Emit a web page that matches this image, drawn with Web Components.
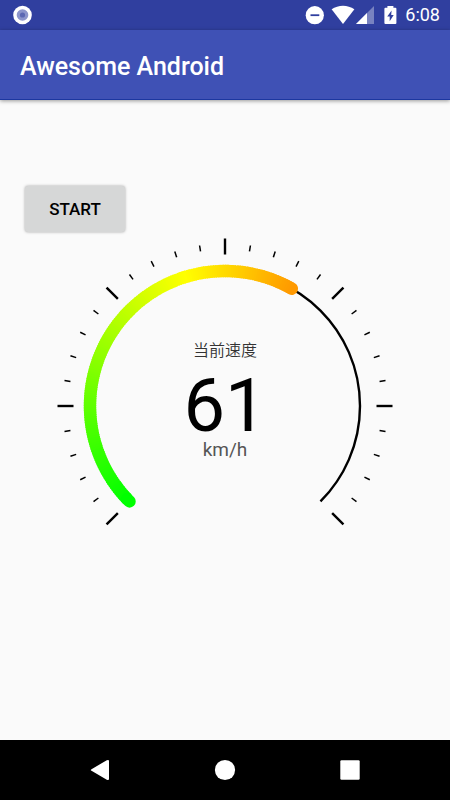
<!DOCTYPE html>
<html lang="zh">
<head>
<meta charset="utf-8">
<meta name="viewport" content="width=device-width, initial-scale=1">
<title>Awesome Android</title>
<style>
  html, body {
    height: 100%;
    margin: 0;
  }
  body {
    font-family: Roboto, "Noto Sans CJK SC", sans-serif;
    background: #fafafa;
  }
</style>
</head>
<body>
<phone-screen>
  <status-bar slot="top" time="6:08"></status-bar>
  <app-bar slot="top">Awesome Android</app-bar>
  <raised-button>START</raised-button>
  <speed-gauge label="当前速度" value="61" unit="km/h"></speed-gauge>
  <nav-bar slot="bottom"></nav-bar>
</phone-screen>

<script>
class PhoneScreen extends HTMLElement {
  constructor() {
    super();
    this.attachShadow({ mode: "open" }).innerHTML = `
      <style>
        :host {
          display: flex;
          flex-direction: column;
          min-height: 100%;
          background: #fafafa;
        }
        main {
          flex: 1;
          display: flex;
          flex-direction: column;
          align-items: flex-start;
          gap: 6px;
          padding: 86px 25px 0;
        }
      </style>
      <slot name="top"></slot>
      <main><slot></slot></main>
      <slot name="bottom"></slot>
    `;
  }
}

class StatusBar extends HTMLElement {
  constructor() {
    super();
    this.attachShadow({ mode: "open" }).innerHTML = `
      <style>
        :host {
          display: flex;
          align-items: center;
          justify-content: space-between;
          height: 30px;
          padding: 0 10px 0 13px;
          background: #303f9f;
          color: #fff;
          font-size: 18px;
          line-height: 32px;
        }
        .icons {
          display: flex;
          align-items: center;
        }
        svg { display: block; }
        .time { margin-left: 8px; }
      </style>
      <svg width="20" height="30" viewBox="0 0 20 30">
        <circle cx="9.5" cy="15" r="9.3" fill="#fff"/>
        <circle cx="9.5" cy="15" r="5.8" fill="#8c95cb"/>
        <circle cx="9.5" cy="15" r="2.6" fill="#5c68b3"/>
      </svg>
      <div class="icons">
        <svg width="92" height="30" viewBox="305 0 92 30" fill="#fff">
          <circle cx="314.8" cy="15.2" r="9.1"/>
          <path d="M310.5 15.2h8.8" stroke="#303f9f" stroke-width="1.8"/>
          <path d="M331.6 9.3C338.5 4.4 347.5 4.4 354.4 9.3L343 23.9Z"/>
          <path d="M374 6v18h-18z" opacity=".35"/>
          <path d="M367 13v11h-11z"/>
          <path d="M385.4 7.8h2V6h6v1.800h2q1 0 1 1v14.200q0 1-1 1h-10q-1 0-1-1V8.800q0-1 1-1z"/>
          <path d="M391.6 10.6l-4.400 5.800h2.500v4.800l4-6.200h-2.500z" fill="#303f9f"/>
        </svg>
        <span class="time"></span>
      </div>
    `;
  }

  connectedCallback() {
    this.shadowRoot.querySelector(".time").textContent = this.getAttribute("time");
  }
}

class AppBar extends HTMLElement {
  constructor() {
    super();
    this.attachShadow({ mode: "open" }).innerHTML = `
      <style>
        :host {
          display: block;
          background: #3f51b5;
          box-shadow: 0 1px 4px rgba(0, 0, 0, 0.4);
        }
        h1 {
          margin: 0;
          padding: 0 20px;
          color: #fff;
          font-size: 25px;
          font-weight: 500;
          line-height: 74px;
          height: 69px;
          border-bottom: 1px solid #1c37a0;
        }
      </style>
      <h1><slot></slot></h1>
    `;
  }
}

class RaisedButton extends HTMLElement {
  constructor() {
    super();
    this.attachShadow({ mode: "open" }).innerHTML = `
      <style>
        :host { display: block; }
        button {
          display: block;
          min-width: 100px;
          height: 46px;
          padding: 0 16px;
          border: 0;
          border-radius: 3px;
          background: #d6d7d7;
          color: #000;
          font: inherit;
          font-size: 17px;
          font-weight: 500;
          box-shadow: 0 0 3px rgba(0, 0, 0, 0.35);
        }
      </style>
      <button type="button"><slot></slot></button>
    `;
  }
}

const START_ANGLE = -135;
const SWEEP = 270;
const RADIUS = 135;

// angles are in degrees, clockwise from twelve o'clock
function point(angle, radius) {
  const rad = angle * Math.PI / 180;
  return (radius * Math.sin(rad)).toFixed(2) + " " + (-radius * Math.cos(rad)).toFixed(2);
}

function arc(from, to) {
  const large = to - from > 180 ? 1 : 0;
  return `M${point(from, RADIUS)}A${RADIUS} ${RADIUS} 0 ${large} 1 ${point(to, RADIUS)}`;
}

// green -> yellow -> red
function colorAt(degrees) {
  const t = degrees / 117;
  if (t < 1) {
    return `rgb(${Math.round(255 * t)}, 255, 0)`;
  }
  return `rgb(255, ${Math.round(255 * (2 - t))}, 0)`;
}

class SpeedGauge extends HTMLElement {
  constructor() {
    super();
    this.attachShadow({ mode: "open" }).innerHTML = `
      <style>
        :host {
          display: block;
          align-self: center;
          width: 100%;
          max-width: 336px;
        }
        svg {
          display: block;
          width: 100%;
        }
        text { text-anchor: middle; }
        .label { font-size: 16px; font-weight: 350; fill: #333; }
        .value { font-size: 74px; fill: #000; }
        .unit { font-size: 19px; fill: #555; }
      </style>
      <svg viewBox="-168 -168 336 288" role="img">
        <g class="ticks" stroke="#000"></g>
        <path class="track" fill="none" stroke="#000" stroke-width="2.4"/>
        <g class="progress" fill="none" stroke-width="12.4"></g>
        <text class="label" x="0" y="-50"></text>
        <text class="value" x="0" y="25"></text>
        <text class="unit" x="0" y="50"></text>
      </svg>
    `;
  }

  connectedCallback() {
    const root = this.shadowRoot;
    const value = Number(this.getAttribute("value"));
    root.querySelector(".label").textContent = this.getAttribute("label");
    root.querySelector(".value").textContent = value;
    root.querySelector(".unit").textContent = this.getAttribute("unit");
    root.querySelector(".ticks").innerHTML = this.renderTicks();
    root.querySelector(".track").setAttribute("d", arc(START_ANGLE, START_ANGLE + SWEEP));
    root.querySelector(".progress").innerHTML = this.renderProgress(SWEEP * value / 100);
  }

  renderTicks() {
    let ticks = "";
    for (let i = 0; i <= 30; i++) {
      const angle = START_ANGLE + i * 9;
      if (i % 5 === 0) {
        ticks += `<path d="M${point(angle, 151.5)}L${point(angle, 167.5)}" stroke-width="2.4"/>`;
      } else {
        ticks += `<path d="M${point(angle, 156.5)}L${point(angle, 162.5)}" stroke-width="1.5"/>`;
      }
    }
    return ticks;
  }

  renderProgress(sweep) {
    const parts = [];
    // drawn from the end back, each piece overlaps the next one a little
    for (let d = 0; d < sweep; d++) {
      const from = START_ANGLE + d;
      const to = START_ANGLE + Math.min(d + 1.5, sweep);
      const cap = d === 0 || d + 1 >= sweep ? "round" : "butt";
      parts.unshift(`<path d="${arc(from, to)}" stroke="${colorAt(d)}" stroke-linecap="${cap}"/>`);
    }
    return parts.join("");
  }
}

class NavBar extends HTMLElement {
  constructor() {
    super();
    this.attachShadow({ mode: "open" }).innerHTML = `
      <style>
        :host { display: block; background: #000; }
        nav {
          display: flex;
          justify-content: center;
          gap: 65px;
          height: 60px;
        }
        button {
          width: 60px;
          padding: 0;
          border: 0;
          background: none;
        }
        svg { display: block; margin: auto; fill: #fff; }
      </style>
      <nav>
        <button type="button" aria-label="Back">
          <svg width="24" height="24" viewBox="0 0 24 24"><path d="M3.5 11.2L18.8 2.200Q21 1.300 21 3V21Q21 22.700 18.800 21.800L3.500 12.800Q2 12 3.500 11.200z"/></svg>
        </button>
        <button type="button" aria-label="Home">
          <svg width="24" height="24" viewBox="0 0 24 24"><circle cx="12" cy="12" r="10.1"/></svg>
        </button>
        <button type="button" aria-label="Recent apps">
          <svg width="24" height="24" viewBox="0 0 24 24"><rect x="2.3" y="2.3" width="19.4" height="19.4" rx="1.2"/></svg>
        </button>
      </nav>
    `;
  }
}

customElements.define("phone-screen", PhoneScreen);
customElements.define("status-bar", StatusBar);
customElements.define("app-bar", AppBar);
customElements.define("raised-button", RaisedButton);
customElements.define("speed-gauge", SpeedGauge);
customElements.define("nav-bar", NavBar);
</script>
</body>
</html>
